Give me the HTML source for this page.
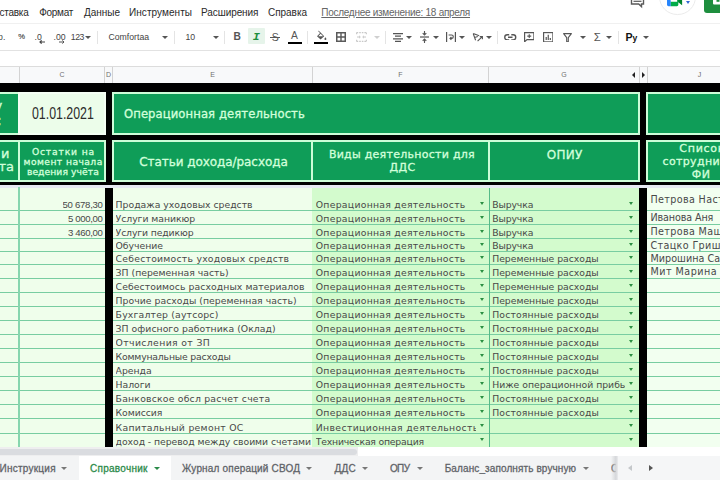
<!DOCTYPE html><html><head><meta charset="utf-8"><title>Sheet</title><style>
*{box-sizing:border-box;margin:0;padding:0}
html,body{width:720px;height:480px;overflow:hidden;background:#fff}
body{position:relative;font-family:"Liberation Sans",sans-serif;color:#333}
.abs{position:absolute}
.t{position:absolute;white-space:nowrap;line-height:1}
.menu{font-size:10px;color:#2a2a2a;top:8px}
.tb{font-size:8.7px;color:#444;top:32.6px}
.sep{position:absolute;top:30.5px;width:1px;height:13px;background:#e4e4e4}
.hdr{position:absolute;background:#0f9d58;border:2.2px solid #cdfdd8}
.ht{position:absolute;white-space:nowrap;line-height:1;color:#d2ffda;font-weight:normal;font-family:"DejaVu Sans","Liberation Sans",sans-serif;-webkit-text-stroke:0.32px #d2ffda}
.cell{position:absolute;font-family:"DejaVu Sans","Liberation Sans",sans-serif;font-size:9.3px;color:#484848;white-space:nowrap;overflow:hidden;line-height:12px;height:12px}
.gl{position:absolute;height:1px;background:#78cda1}
.vl{position:absolute;width:1px;background:#6cc99a}
.col{position:absolute;top:66.5px;height:16px;background:#f8f9fa;border-right:1px solid #d3d3d3;font-size:7px;color:#707070;text-align:center;line-height:16.5px}
.tab{position:absolute;top:456.5px;height:24px;font-size:10px;color:#5f6368;line-height:24px;white-space:nowrap;-webkit-text-stroke:0.28px currentColor}
.dd{position:absolute;width:0;height:0;border-left:2.8px solid transparent;border-right:2.8px solid transparent;border-top:3.1px solid #2b8f42}
.tdd{position:absolute;width:0;height:0;border-left:3.2px solid transparent;border-right:3.2px solid transparent;border-top:3.3px solid #666}
</style></head><body>
<div class="t menu" style="right:691.5px;letter-spacing:-0.24px">Вставка</div>
<div class="t menu" style="left:39.2px;letter-spacing:-0.266px">Формат</div>
<div class="t menu" style="left:84px;letter-spacing:-0.028px">Данные</div>
<div class="t menu" style="left:129px;letter-spacing:0.064px">Инструменты</div>
<div class="t menu" style="left:201px;letter-spacing:-0.073px">Расширения</div>
<div class="t menu" style="left:268px;letter-spacing:-0.039px">Справка</div>
<div class="t menu" style="left:321.3px;color:#666;text-decoration:underline;letter-spacing:-0.277px">Последнее изменение: 18 апреля</div>
<svg class="abs" style="left:630px;top:-7px" width="16" height="16" viewBox="0 0 16 16"><path d="M1.5 1.5h12v9.5H11.5v2.6L8.7 11H1.5z" fill="none" stroke="#5a5a5a" stroke-width="1.4"/><path d="M3.5 8.3h8" stroke="#5a5a5a" stroke-width="1.2"/></svg>
<div class="abs" style="left:659px;top:-22px;width:36.5px;height:36.5px;border-radius:50%;border:1px solid #ebebeb;background:#fff"></div>
<svg class="abs" style="left:667px;top:-5.6px" width="17" height="13.2" viewBox="0 0 18 14"><path d="M0 0h4v13H1.5A1.5 1.5 0 0 1 0 11.500z" fill="#2684fc"/><path d="M4 8h8v3.500A1.500 1.500 0 0 1 10.500 13H4z" fill="#00ac47"/><path d="M4 0h8v8H4z" fill="#fff"/><path d="M12 0v13" stroke="#00832d" stroke-width="0"/><path d="M11 4l5-4v12l-5-4z" fill="#00832d"/><path d="M11 0h1v9h-1z" fill="#00ac47"/></svg>
<div class="abs" style="left:686px;top:0.5px;width:0;height:0;border-left:2.7px solid transparent;border-right:2.7px solid transparent;border-top:3px solid #3367d6"></div>
<div class="abs" style="left:704px;top:-10px;width:30px;height:23.3px;background:#1e8e3e;border-radius:3px"></div>
<svg class="abs" style="left:713px;top:-6.5px" width="10" height="11" viewBox="0 0 10 11"><rect x="0" y="3" width="10" height="7.5" rx="1" fill="#fff"/><rect x="3.5" y="5.200" width="3" height="2.600" fill="#1e8e3e"/></svg>
<div class="abs" style="left:0;top:22.5px;width:720px;height:28.5px;border-bottom:1px solid #e2e2e2;border-top:1px solid #f0f0f0"></div>
<div class="t tb" style="left:-1.9px;">р.</div>
<div class="t tb" style="left:18.2px;font-size:7.6px;top:33.2px;-webkit-text-stroke:0.15px #444">%</div>
<div class="t tb" style="left:34.5px;">.0</div>
<div class="t tb" style="left:53.5px;">.00</div>
<div class="t tb" style="left:70.8px;letter-spacing:-0.45px">123</div>
<svg class="abs" style="left:39.3px;top:40.1px" width="6" height="4" viewBox="0 0 6 4"><path d="M6 2H1M2.6 0.4L1 2l1.6 1.6" stroke="#444" stroke-width="1.2" fill="none"/></svg>
<svg class="abs" style="left:59.3px;top:40.1px" width="6" height="4" viewBox="0 0 6 4"><path d="M0 2h5M3.4 0.4L5 2 3.4 3.6" stroke="#555" stroke-width="1" fill="none"/></svg>
<div class="abs" style="left:85.3px;top:35.7px;width:0;height:0;border-left:3px solid transparent;border-right:3px solid transparent;border-top:3.2px solid #555"></div>
<div class="sep" style="left:97.0px"></div>
<div class="t tb" style="left:108.5px;">Comfortaa</div>
<div class="abs" style="left:162.3px;top:35.7px;width:0;height:0;border-left:3px solid transparent;border-right:3px solid transparent;border-top:3.2px solid #555"></div>
<div class="sep" style="left:174.0px"></div>
<div class="t tb" style="left:185.5px;">10</div>
<div class="abs" style="left:213.0px;top:35.7px;width:0;height:0;border-left:3px solid transparent;border-right:3px solid transparent;border-top:3.2px solid #555"></div>
<div class="sep" style="left:224.0px"></div>
<div class="t tb" style="left:233.6px;font-weight:bold;font-size:10.2px;top:32.1px;color:#555">B</div>
<div class="abs" style="left:248px;top:28px;width:16.7px;height:16.3px;background:#e6f4ea;border-radius:1px"></div>
<div class="t tb" style="left:252.7px;font-family:'Liberation Mono',monospace;font-style:italic;font-weight:bold;font-size:11.8px;top:31.5px;color:#1e8e3e">I</div>
<div class="t tb" style="left:271.8px;font-size:10.5px;top:31.9px;color:#555">S</div>
<div class="abs" style="left:270px;top:36.6px;width:10.3px;height:1.1px;background:#555"></div>
<div class="t tb" style="left:291px;font-size:10.3px;top:31.4px;color:#555">A</div>
<div class="abs" style="left:287.5px;top:41.7px;width:14.3px;height:2.8px;background:#000"></div>
<div class="sep" style="left:307.0px"></div>
<svg class="abs" style="left:314.7px;top:29.5px" width="12" height="11" viewBox="0 0 12 11"><path d="M2 6.2L5.6 2.6l3.6 3.6-3.6 3.4z" fill="#555"/><path d="M3.4 1.2l2.2 1.6" stroke="#555" stroke-width="1"/><path d="M10.4 7.2c.6.9 1 1.4 1 1.9a1 1 0 0 1-2 0c0-.5.4-1 1-1.9z" fill="#555"/><path d="M3.3 6.2h4.8L5.7 3.8z" fill="#fff"/></svg>
<div class="abs" style="left:314px;top:41.7px;width:14px;height:2.8px;background:#000"></div>
<svg class="abs" style="left:336.0px;top:32.2px" width="10" height="10" viewBox="0 0 10 10"><rect x=".75" y=".75" width="8.5" height="8.5" fill="none" stroke="#5a5a5a" stroke-width="1.5"/><path d="M5 0v10M0 5h10" stroke="#5a5a5a" stroke-width="1.4"/></svg>
<svg class="abs" style="left:355.5px;top:32.0px" width="11" height="10" viewBox="0 0 11 10"><path d="M.6 .6h9.8M.6 9.4h9.8M.6 .6v2.2M10.4 .6v2.2M.6 9.4V7.2M10.4 9.4V7.2" stroke="#c8c8c8" stroke-width="1.1" fill="none" stroke-dasharray="1.6 1"/><path d="M1 5h3M10 5H7M3 3.8L4.3 5 3 6.2M8 3.8L6.7 5 8 6.2" stroke="#c8c8c8" stroke-width="1" fill="none"/></svg>
<div class="abs" style="left:374.0px;top:35.7px;width:0;height:0;border-left:3px solid transparent;border-right:3px solid transparent;border-top:3.2px solid #cfcfcf"></div>
<div class="sep" style="left:385.0px"></div>
<svg class="abs" style="left:392.5px;top:32.5px" width="10" height="9" viewBox="0 0 10 9"><path d="M0 .7h10M2 3.2h6M0 5.8h10M2 8.3h6" stroke="#555" stroke-width="1.2"/></svg>
<div class="abs" style="left:406.0px;top:35.7px;width:0;height:0;border-left:3px solid transparent;border-right:3px solid transparent;border-top:3.2px solid #555"></div>
<svg class="abs" style="left:419.5px;top:31.0px" width="9" height="12" viewBox="0 0 9 12"><path d="M0 6h9" stroke="#555" stroke-width="1.2"/><path d="M4.5 0v3.6M2.7 2.2l1.8 1.8 1.8-1.8M4.5 12V8.4M2.7 9.8l1.8-1.8 1.8 1.8" stroke="#555" stroke-width="1.1" fill="none"/></svg>
<div class="abs" style="left:433.0px;top:35.7px;width:0;height:0;border-left:3px solid transparent;border-right:3px solid transparent;border-top:3.2px solid #555"></div>
<svg class="abs" style="left:446.0px;top:32.0px" width="10" height="10" viewBox="0 0 10 10"><path d="M.6 0v10M9.4 0v10" stroke="#555" stroke-width="1.2"/><path d="M2.6 3h3a1.7 1.7 0 0 1 0 3.4H4.2M5.4 5L4 6.4l1.4 1.4" stroke="#555" stroke-width="1.1" fill="none"/></svg>
<div class="abs" style="left:459.0px;top:35.7px;width:0;height:0;border-left:3px solid transparent;border-right:3px solid transparent;border-top:3.2px solid #555"></div>
<svg class="abs" style="left:471.5px;top:32.0px" width="11" height="10" viewBox="0 0 11 10"><path d="M1.2 1.6l2.4 6.6M1.2 1.6l6 2.2M2.6 5.4l3.2-1" stroke="#555" stroke-width="1.1" fill="none"/><path d="M5.6 9.2l4.4-4.4M10.4 7.2V4.6H7.8" stroke="#555" stroke-width="1.1" fill="none"/></svg>
<div class="abs" style="left:486.0px;top:35.7px;width:0;height:0;border-left:3px solid transparent;border-right:3px solid transparent;border-top:3.2px solid #555"></div>
<div class="sep" style="left:497.0px"></div>
<svg class="abs" style="left:504.2px;top:33.8px" width="12.5" height="6.5" viewBox="0 0 12.5 6.5"><path d="M5.2 .7H3.3a2.55 2.55 0 0 0 0 5.1h1.9M7.3 .7h1.9a2.55 2.55 0 0 1 0 5.1H7.3M4 3.25h4.5" stroke="#555" stroke-width="1.35" fill="none"/></svg>
<svg class="abs" style="left:523.8px;top:31.8px" width="10.5" height="10.5" viewBox="0 0 10.5 10.5"><path d="M.6 .6h9.3v7H3L.6 9.8z" stroke="#555" stroke-width="1.15" fill="none"/><path d="M5.25 2.2v3.8M3.3 4.1h3.9" stroke="#555" stroke-width="1.1"/></svg>
<svg class="abs" style="left:542.8px;top:31.8px" width="10.5" height="10.5" viewBox="0 0 10.5 10.5"><rect x=".6" y=".6" width="9.3" height="9.3" fill="none" stroke="#555" stroke-width="1.15"/><path d="M3.2 8V5M5.25 8V2.8M7.3 8V6" stroke="#555" stroke-width="1.2"/></svg>
<svg class="abs" style="left:563.0px;top:32.5px" width="9" height="9.5" viewBox="0 0 9 9.5"><path d="M.6 .6h7.8L5.3 4.6v4.2H3.7V4.6z" stroke="#555" stroke-width="1.1" fill="none" stroke-linejoin="round"/></svg>
<div class="abs" style="left:579.5px;top:35.7px;width:0;height:0;border-left:3px solid transparent;border-right:3px solid transparent;border-top:3.2px solid #555"></div>
<div class="t tb" style="left:593.7px;font-size:11.5px;top:31.6px;color:#555">Σ</div>
<div class="abs" style="left:606.0px;top:35.7px;width:0;height:0;border-left:3px solid transparent;border-right:3px solid transparent;border-top:3.2px solid #555"></div>
<div class="sep" style="left:617.5px"></div>
<div class="t tb" style="left:625.6px;font-weight:bold;font-size:10.6px;top:32.3px;color:#111;letter-spacing:-0.3px">Р<span style="font-size:8.6px">у</span></div>
<div class="abs" style="left:643.0px;top:35.7px;width:0;height:0;border-left:3px solid transparent;border-right:3px solid transparent;border-top:3.2px solid #555"></div>
<div class="abs" style="left:0;top:66px;width:720px;height:1px;background:#dcdcdc"></div>
<div class="col" style="left:-1px;width:21px"></div>
<div class="col" style="left:20px;width:85px">C</div>
<div class="col" style="left:105px;width:8px">D</div>
<div class="col" style="left:113px;width:200px">E</div>
<div class="col" style="left:313px;width:176px">F</div>
<div class="col" style="left:489px;width:151px">G</div>
<div class="col" style="left:640px;width:8px"></div>
<div class="col" style="left:648px;width:104px">J</div>
<div class="abs" style="left:632.3px;top:71.7px;width:0;height:0;border-top:3px solid transparent;border-bottom:3px solid transparent;border-right:3.8px solid #222"></div>
<div class="abs" style="left:642px;top:71.7px;width:0;height:0;border-top:3px solid transparent;border-bottom:3px solid transparent;border-left:3.8px solid #222"></div>
<div class="abs" style="left:0;top:82.5px;width:720px;height:102.5px;background:#000"></div>
<div class="abs" style="left:0;top:185px;width:720px;height:262.3px;background:#effeeb"></div>
<div class="abs" style="left:0;top:185px;width:720px;height:3.3px;background:#e6e9f2"></div>
<div class="abs" style="left:312.2px;top:188.3px;width:326.8px;height:259px;background:#d3fbcd"></div>
<div class="abs" style="left:647px;top:188.3px;width:73px;height:259px;background:#f2fff0"></div>
<div class="abs" style="left:105px;top:188.3px;width:7.5px;height:259px;background:#000"></div>
<div class="abs" style="left:638.7px;top:188.3px;width:8.3px;height:259px;background:#000"></div>
<div class="hdr" style="left:-5px;top:91.8px;width:24.7px;height:42.95px;"></div>
<div class="abs" style="left:17.8px;top:91.8px;width:88.1px;height:42.95px;background:#ecfdea;border:2px solid #f5fff4"></div>
<div class="t" style="left:31.6px;top:105.5px;font-size:16px;color:#2b2b2b;transform:scaleX(0.772);transform-origin:0 0">01.01.2021</div>
<div class="hdr" style="left:111.5px;top:91.8px;width:528.5px;height:42.95px;"></div>
<div class="ht" style="left:124px;top:109.49px;font-size:11.6px;letter-spacing:0.090px;">Операционная деятельность</div>
<div class="hdr" style="left:646.2px;top:91.8px;width:113.79999999999995px;height:42.95px;"></div>
<div class="hdr" style="left:-5px;top:139.8px;width:24.6px;height:42.0px;"></div>
<div class="hdr" style="left:18px;top:139.8px;width:88px;height:42.0px;"></div>
<div class="ht" style="left:31.9px;top:146.92px;font-size:9.2px;letter-spacing:0.844px;">Остатки на</div>
<div class="ht" style="left:23.6px;top:157.42px;font-size:9.2px;letter-spacing:0.423px;">момент начала</div>
<div class="ht" style="left:26.9px;top:167.42px;font-size:9.2px;letter-spacing:0.075px;">ведения учёта</div>
<div class="hdr" style="left:111.5px;top:139.8px;width:201.8px;height:42.0px;"></div>
<div class="ht" style="left:139.2px;top:155.95px;font-size:12px;letter-spacing:-0.062px;">Статьи дохода/расхода</div>
<div class="hdr" style="left:311px;top:139.8px;width:179.5px;height:42.0px;"></div>
<div class="ht" style="left:328.9px;top:148.79px;font-size:11px;letter-spacing:0.267px;">Виды деятельности для</div>
<div class="ht" style="left:389.5px;top:162.49px;font-size:11px;letter-spacing:0.412px;">ДДС</div>
<div class="hdr" style="left:488.2px;top:139.8px;width:151.8px;height:42.0px;"></div>
<div class="ht" style="left:546.7px;top:149.05px;font-size:12px;letter-spacing:0.278px;">ОПИУ</div>
<div class="hdr" style="left:646.2px;top:139.8px;width:113.79999999999995px;height:42.0px;"></div>
<div class="ht" style="left:679.3px;top:143.19px;font-size:11px;letter-spacing:0.749px;">Список</div>
<div class="ht" style="left:662.5px;top:156.09px;font-size:11px;letter-spacing:0.362px;">сотрудников</div>
<div class="ht" style="left:691.7px;top:169.19px;font-size:11px;letter-spacing:0.597px;">ФИ</div>
<div class="ht" style="right:717.6px;top:98.5px;font-size:14px">Веду</div>
<div class="ht" style="right:718.3px;top:113px;font-size:14px">учёт с:</div>
<div class="ht" style="right:710.6px;top:147.2px;font-size:13px">Кошельки и</div>
<div class="ht" style="right:706px;top:160.2px;font-size:13px">расчётные счета</div>
<div class="gl" style="left:0;top:209.90px;width:105px"></div>
<div class="gl" style="left:112.5px;top:209.90px;width:526.5px"></div>
<div class="gl" style="left:647px;top:209.90px;width:73px"></div>
<div class="cell" style="left:115.6px;top:199.00px;width:197px;letter-spacing:0.001px;">Продажа уходовых средств</div>
<div class="cell" style="left:315.8px;top:199.00px;width:160.5px;letter-spacing:0.260px;">Операционная деятельность</div>
<div class="cell" style="left:492.2px;top:199.00px;width:133px;letter-spacing:-0.123px;">Выручка</div>
<div class="cell" style="left:62.5px;top:198.80px;width:50px;font-family:'Liberation Sans',sans-serif;font-size:9.6px;letter-spacing:-0.286px">50 678,30</div>
<div class="cell" style="left:650.4px;top:194.35px;width:80px;font-size:9.6px;letter-spacing:0.368px">Петрова Настя</div>
<div class="dd" style="left:479.5px;top:201.70px"></div>
<div class="dd" style="left:628.8px;top:201.70px"></div>
<div class="gl" style="left:0;top:223.90px;width:105px"></div>
<div class="gl" style="left:112.5px;top:223.90px;width:526.5px"></div>
<div class="gl" style="left:647px;top:223.90px;width:73px"></div>
<div class="cell" style="left:115.6px;top:213.00px;width:197px;letter-spacing:-0.052px;">Услуги маникюр</div>
<div class="cell" style="left:315.8px;top:213.00px;width:160.5px;letter-spacing:0.260px;">Операционная деятельность</div>
<div class="cell" style="left:492.2px;top:213.00px;width:133px;letter-spacing:-0.123px;">Выручка</div>
<div class="cell" style="left:67.9px;top:212.80px;width:50px;font-family:'Liberation Sans',sans-serif;font-size:9.6px;letter-spacing:-0.337px">5 000,00</div>
<div class="cell" style="left:650.4px;top:212.40px;width:80px;font-size:9.6px;letter-spacing:-0.105px">Иванова Аня</div>
<div class="dd" style="left:479.5px;top:215.70px"></div>
<div class="dd" style="left:628.8px;top:215.70px"></div>
<div class="gl" style="left:0;top:237.90px;width:105px"></div>
<div class="gl" style="left:112.5px;top:237.90px;width:526.5px"></div>
<div class="gl" style="left:647px;top:237.90px;width:73px"></div>
<div class="cell" style="left:115.6px;top:227.00px;width:197px;letter-spacing:-0.132px;">Услуги педикюр</div>
<div class="cell" style="left:315.8px;top:227.00px;width:160.5px;letter-spacing:0.260px;">Операционная деятельность</div>
<div class="cell" style="left:492.2px;top:227.00px;width:133px;letter-spacing:-0.123px;">Выручка</div>
<div class="cell" style="left:67.9px;top:226.80px;width:50px;font-family:'Liberation Sans',sans-serif;font-size:9.6px;letter-spacing:-0.337px">3 460,00</div>
<div class="cell" style="left:650.4px;top:226.40px;width:80px;font-size:9.6px;letter-spacing:0.367px">Петрова Маша</div>
<div class="dd" style="left:479.5px;top:229.70px"></div>
<div class="dd" style="left:628.8px;top:229.70px"></div>
<div class="gl" style="left:0;top:250.80px;width:105px"></div>
<div class="gl" style="left:112.5px;top:250.80px;width:526.5px"></div>
<div class="gl" style="left:647px;top:250.80px;width:73px"></div>
<div class="cell" style="left:115.6px;top:239.90px;width:197px;letter-spacing:-0.044px;">Обучение</div>
<div class="cell" style="left:315.8px;top:239.90px;width:160.5px;letter-spacing:0.260px;">Операционная деятельность</div>
<div class="cell" style="left:492.2px;top:239.90px;width:133px;letter-spacing:-0.123px;">Выручка</div>
<div class="cell" style="left:650.4px;top:239.85px;width:80px;font-size:9.6px;letter-spacing:0.368px">Стацко Гриша</div>
<div class="dd" style="left:479.5px;top:242.60px"></div>
<div class="dd" style="left:628.8px;top:242.60px"></div>
<div class="gl" style="left:0;top:263.90px;width:105px"></div>
<div class="gl" style="left:112.5px;top:263.90px;width:526.5px"></div>
<div class="gl" style="left:647px;top:263.90px;width:73px"></div>
<div class="cell" style="left:115.6px;top:253.00px;width:197px;letter-spacing:0.230px;">Себестоимость уходовых средств</div>
<div class="cell" style="left:315.8px;top:253.00px;width:160.5px;letter-spacing:0.260px;">Операционная деятельность</div>
<div class="cell" style="left:492.2px;top:253.00px;width:133px;letter-spacing:-0.024px;">Переменные расходы</div>
<div class="cell" style="left:650.4px;top:252.85px;width:80px;font-size:9.6px;letter-spacing:0.047px">Мирошина Саша</div>
<div class="dd" style="left:479.5px;top:255.70px"></div>
<div class="dd" style="left:628.8px;top:255.70px"></div>
<div class="gl" style="left:0;top:277.80px;width:105px"></div>
<div class="gl" style="left:112.5px;top:277.80px;width:526.5px"></div>
<div class="gl" style="left:647px;top:277.80px;width:73px"></div>
<div class="cell" style="left:115.6px;top:266.90px;width:197px;letter-spacing:0.004px;">ЗП (переменная часть)</div>
<div class="cell" style="left:315.8px;top:266.90px;width:160.5px;letter-spacing:0.260px;">Операционная деятельность</div>
<div class="cell" style="left:492.2px;top:266.90px;width:133px;letter-spacing:-0.024px;">Переменные расходы</div>
<div class="cell" style="left:650.4px;top:266.35px;width:80px;font-size:9.6px;letter-spacing:0.500px">Мит Марина</div>
<div class="dd" style="left:479.5px;top:269.60px"></div>
<div class="dd" style="left:628.8px;top:269.60px"></div>
<div class="gl" style="left:0;top:291.80px;width:105px"></div>
<div class="gl" style="left:112.5px;top:291.80px;width:526.5px"></div>
<div class="gl" style="left:647px;top:291.80px;width:73px"></div>
<div class="cell" style="left:115.6px;top:280.90px;width:197px;letter-spacing:0.063px;">Себестоимось расходных материалов</div>
<div class="cell" style="left:315.8px;top:280.90px;width:160.5px;letter-spacing:0.260px;">Операционная деятельность</div>
<div class="cell" style="left:492.2px;top:280.90px;width:133px;letter-spacing:-0.024px;">Переменные расходы</div>
<div class="dd" style="left:479.5px;top:283.60px"></div>
<div class="dd" style="left:628.8px;top:283.60px"></div>
<div class="gl" style="left:0;top:305.80px;width:105px"></div>
<div class="gl" style="left:112.5px;top:305.80px;width:526.5px"></div>
<div class="gl" style="left:647px;top:305.80px;width:73px"></div>
<div class="cell" style="left:115.6px;top:294.90px;width:197px;letter-spacing:0.018px;">Прочие расходы (переменная часть)</div>
<div class="cell" style="left:315.8px;top:294.90px;width:160.5px;letter-spacing:0.260px;">Операционная деятельность</div>
<div class="cell" style="left:492.2px;top:294.90px;width:133px;letter-spacing:-0.024px;">Переменные расходы</div>
<div class="dd" style="left:479.5px;top:297.60px"></div>
<div class="dd" style="left:628.8px;top:297.60px"></div>
<div class="gl" style="left:0;top:319.80px;width:105px"></div>
<div class="gl" style="left:112.5px;top:319.80px;width:526.5px"></div>
<div class="gl" style="left:647px;top:319.80px;width:73px"></div>
<div class="cell" style="left:115.6px;top:308.90px;width:197px;letter-spacing:0.173px;">Бухгалтер (аутсорс)</div>
<div class="cell" style="left:315.8px;top:308.90px;width:160.5px;letter-spacing:0.260px;">Операционная деятельность</div>
<div class="cell" style="left:492.2px;top:308.90px;width:133px;letter-spacing:0.140px;">Постоянные расходы</div>
<div class="dd" style="left:479.5px;top:311.60px"></div>
<div class="dd" style="left:628.8px;top:311.60px"></div>
<div class="gl" style="left:0;top:333.80px;width:105px"></div>
<div class="gl" style="left:112.5px;top:333.80px;width:526.5px"></div>
<div class="gl" style="left:647px;top:333.80px;width:73px"></div>
<div class="cell" style="left:115.6px;top:322.90px;width:197px;letter-spacing:0.033px;">ЗП офисного работника (Оклад)</div>
<div class="cell" style="left:315.8px;top:322.90px;width:160.5px;letter-spacing:0.260px;">Операционная деятельность</div>
<div class="cell" style="left:492.2px;top:322.90px;width:133px;letter-spacing:0.140px;">Постоянные расходы</div>
<div class="dd" style="left:479.5px;top:325.60px"></div>
<div class="dd" style="left:628.8px;top:325.60px"></div>
<div class="gl" style="left:0;top:347.70px;width:105px"></div>
<div class="gl" style="left:112.5px;top:347.70px;width:526.5px"></div>
<div class="gl" style="left:647px;top:347.70px;width:73px"></div>
<div class="cell" style="left:115.6px;top:336.80px;width:197px;letter-spacing:0.364px;">Отчисления от ЗП</div>
<div class="cell" style="left:315.8px;top:336.80px;width:160.5px;letter-spacing:0.260px;">Операционная деятельность</div>
<div class="cell" style="left:492.2px;top:336.80px;width:133px;letter-spacing:0.140px;">Постоянные расходы</div>
<div class="dd" style="left:479.5px;top:339.50px"></div>
<div class="dd" style="left:628.8px;top:339.50px"></div>
<div class="gl" style="left:0;top:361.80px;width:105px"></div>
<div class="gl" style="left:112.5px;top:361.80px;width:526.5px"></div>
<div class="gl" style="left:647px;top:361.80px;width:73px"></div>
<div class="cell" style="left:115.6px;top:350.90px;width:197px;letter-spacing:-0.188px;">Коммунальные расходы</div>
<div class="cell" style="left:315.8px;top:350.90px;width:160.5px;letter-spacing:0.260px;">Операционная деятельность</div>
<div class="cell" style="left:492.2px;top:350.90px;width:133px;letter-spacing:0.140px;">Постоянные расходы</div>
<div class="dd" style="left:479.5px;top:353.60px"></div>
<div class="dd" style="left:628.8px;top:353.60px"></div>
<div class="gl" style="left:0;top:375.90px;width:105px"></div>
<div class="gl" style="left:112.5px;top:375.90px;width:526.5px"></div>
<div class="gl" style="left:647px;top:375.90px;width:73px"></div>
<div class="cell" style="left:115.6px;top:365.00px;width:197px;letter-spacing:-0.037px;">Аренда</div>
<div class="cell" style="left:315.8px;top:365.00px;width:160.5px;letter-spacing:0.260px;">Операционная деятельность</div>
<div class="cell" style="left:492.2px;top:365.00px;width:133px;letter-spacing:0.140px;">Постоянные расходы</div>
<div class="dd" style="left:479.5px;top:367.70px"></div>
<div class="dd" style="left:628.8px;top:367.70px"></div>
<div class="gl" style="left:0;top:389.90px;width:105px"></div>
<div class="gl" style="left:112.5px;top:389.90px;width:526.5px"></div>
<div class="gl" style="left:647px;top:389.90px;width:73px"></div>
<div class="cell" style="left:115.6px;top:379.00px;width:197px;letter-spacing:-0.050px;">Налоги</div>
<div class="cell" style="left:315.8px;top:379.00px;width:160.5px;letter-spacing:0.260px;">Операционная деятельность</div>
<div class="cell" style="left:492.2px;top:379.00px;width:133px;letter-spacing:-0.007px;">Ниже операционной прибыли</div>
<div class="dd" style="left:479.5px;top:381.70px"></div>
<div class="dd" style="left:628.8px;top:381.70px"></div>
<div class="gl" style="left:0;top:404.10px;width:105px"></div>
<div class="gl" style="left:112.5px;top:404.10px;width:526.5px"></div>
<div class="gl" style="left:647px;top:404.10px;width:73px"></div>
<div class="cell" style="left:115.6px;top:393.20px;width:197px;letter-spacing:0.197px;">Банковское обсл расчет счета</div>
<div class="cell" style="left:315.8px;top:393.20px;width:160.5px;letter-spacing:0.260px;">Операционная деятельность</div>
<div class="cell" style="left:492.2px;top:393.20px;width:133px;letter-spacing:0.140px;">Постоянные расходы</div>
<div class="dd" style="left:479.5px;top:395.90px"></div>
<div class="dd" style="left:628.8px;top:395.90px"></div>
<div class="gl" style="left:0;top:418.10px;width:105px"></div>
<div class="gl" style="left:112.5px;top:418.10px;width:526.5px"></div>
<div class="gl" style="left:647px;top:418.10px;width:73px"></div>
<div class="cell" style="left:115.6px;top:407.20px;width:197px;letter-spacing:-0.072px;">Комиссия</div>
<div class="cell" style="left:315.8px;top:407.20px;width:160.5px;letter-spacing:0.260px;">Операционная деятельность</div>
<div class="cell" style="left:492.2px;top:407.20px;width:133px;letter-spacing:0.140px;">Постоянные расходы</div>
<div class="dd" style="left:479.5px;top:409.90px"></div>
<div class="dd" style="left:628.8px;top:409.90px"></div>
<div class="gl" style="left:0;top:432.50px;width:105px"></div>
<div class="gl" style="left:112.5px;top:432.50px;width:526.5px"></div>
<div class="gl" style="left:647px;top:432.50px;width:73px"></div>
<div class="cell" style="left:115.6px;top:421.60px;width:197px;letter-spacing:0.287px;">Капитальный ремонт ОС</div>
<div class="cell" style="left:315.8px;top:421.60px;width:160.5px;letter-spacing:0.352px;">Инвестиционная деятельность</div>
<div class="dd" style="left:479.5px;top:424.30px"></div>
<div class="dd" style="left:628.8px;top:424.30px"></div>
<div class="gl" style="left:0;top:446.50px;width:105px"></div>
<div class="gl" style="left:112.5px;top:446.50px;width:526.5px"></div>
<div class="gl" style="left:647px;top:446.50px;width:73px"></div>
<div class="cell" style="left:115.6px;top:435.60px;width:197px;letter-spacing:-0.068px;">доход - перевод между своими счетами</div>
<div class="cell" style="left:315.8px;top:435.60px;width:160.5px;letter-spacing:-0.209px;">Техническая операция</div>
<div class="dd" style="left:479.5px;top:438.30px"></div>
<div class="dd" style="left:628.8px;top:438.30px"></div>
<div class="vl" style="left:17.9px;top:187px;height:259.5px;width:2px;background:#86d6ae"></div>
<div class="vl" style="left:488.9px;top:188.3px;height:259px;width:1.3px;background:#55bb88"></div>
<div class="abs" style="left:0;top:447.3px;width:720px;height:9px;background:#fff"></div>
<div class="abs" style="left:0;top:447.3px;width:358px;height:8.4px;background:#eeeeef"></div>
<div class="abs" style="left:-10px;top:448.6px;width:367px;height:6.2px;background:#dadce0;border-radius:3px"></div>
<div class="abs" style="left:0;top:455.5px;width:720px;height:25px;background:#f3f4f5"></div>
<div class="abs" style="left:79px;top:455.5px;width:92px;height:25px;background:#fff"></div>
<div class="tab" style="right:664.2px;color:#5f6368;letter-spacing:0.25px">Инструкция</div>
<div class="tdd" style="left:61.3px;top:467.3px;border-top-color:#777"></div>
<div class="tab" style="left:90px;color:#2a8a48;letter-spacing:0.278px">Справочник</div>
<div class="tdd" style="left:153.8px;top:467.3px;border-top-color:#2a8a48"></div>
<div class="tab" style="left:182px;color:#5f6368;letter-spacing:0.184px">Журнал операций СВОД</div>
<div class="tdd" style="left:305.5px;top:467.3px;border-top-color:#777"></div>
<div class="tab" style="left:334.5px;color:#5f6368;letter-spacing:0.209px">ДДС</div>
<div class="tdd" style="left:361.8px;top:467.3px;border-top-color:#777"></div>
<div class="tab" style="left:390px;color:#5f6368;letter-spacing:-0.664px">ОПУ</div>
<div class="tdd" style="left:416.8px;top:467.3px;border-top-color:#777"></div>
<div class="tab" style="left:444.7px;color:#5f6368;letter-spacing:0.111px">Баланс_заполнять вручную</div>
<div class="tdd" style="left:583.4px;top:467.3px;border-top-color:#777"></div>
<div class="tab" style="left:611px;width:4.5px;overflow:hidden">Сводная</div>
<div class="abs" style="left:611px;top:455.5px;width:7px;height:25px;background:linear-gradient(90deg,rgba(243,244,245,0),rgba(210,212,215,.9) 70%,rgba(235,236,238,1))"></div>
<div class="abs" style="left:618px;top:455.5px;width:102px;height:25px;background:#f5f6f7"></div>
<div class="abs" style="left:627.5px;top:464.5px;width:0;height:0;border-top:3.5px solid transparent;border-bottom:3.5px solid transparent;border-right:4px solid #c4c7ca"></div>
<div class="abs" style="left:648.5px;top:464.5px;width:0;height:0;border-top:3.5px solid transparent;border-bottom:3.5px solid transparent;border-left:4px solid #555"></div>
</body></html>
